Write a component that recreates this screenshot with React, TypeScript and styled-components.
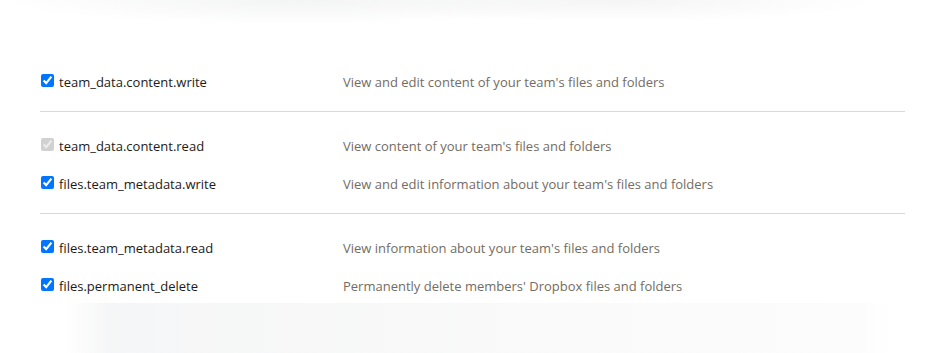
import React from 'react'
import styled, { createGlobalStyle } from 'styled-components'

type Scope = { name: string; description: string; disabled?: boolean }

const groups: Scope[][] = [
  [{ name: 'team_data.content.write', description: "View and edit content of your team's files and folders" }],
  [
    { name: 'team_data.content.read', description: "View content of your team's files and folders", disabled: true },
    { name: 'files.team_metadata.write', description: "View and edit information about your team's files and folders" },
  ],
  [
    { name: 'files.team_metadata.read', description: "View information about your team's files and folders" },
    { name: 'files.permanent_delete', description: "Permanently delete members' Dropbox files and folders" },
  ],
]

export default function App() {
  return (
    <>
      <GlobalStyle />
      <Page>
        <ScopeList>
          {groups.map((group, i) => (
            <Group key={i} isLast={i === groups.length - 1}>
              {group.map((scope) => (
                <Row key={scope.name}>
                  <ScopeName>
                    <Check type="checkbox" checked readOnly disabled={scope.disabled} />
                    {scope.name}
                  </ScopeName>
                  <Description>{scope.description}</Description>
                </Row>
              ))}
            </Group>
          ))}
        </ScopeList>
      </Page>
    </>
  )
}

const GlobalStyle = createGlobalStyle`
  html, body {
    margin: 0;
    padding: 0;
  }
  body {
    width: 931px;
    height: 353px;
    overflow: hidden;
    font-family: "Open Sans", "Noto Sans", sans-serif;
    background:
      radial-gradient(ellipse 300px 24px at 300px 0px, rgba(240, 241, 241, 0.8), rgba(255, 255, 255, 0)),
      radial-gradient(ellipse 260px 22px at 620px 0px, rgba(242, 242, 242, 0.8), rgba(255, 255, 255, 0)),
      linear-gradient(90deg, rgba(255, 255, 255, 0) 65px, rgba(244, 245, 246, 0.9) 110px, rgba(248, 248, 248, 0.8) 500px, rgba(250, 250, 250, 0.6) 860px, rgba(255, 255, 255, 0) 895px) 0 303px / 100% 50px no-repeat,
      #fff;
  }
`

const Page = styled.div`
  padding: 48px 0 0 40px;
  height: 303px;
  box-sizing: border-box;
  width: 931px;
`

const ScopeList = styled.div`
  display: flex;
  flex-direction: column;
  width: 865px;
`

const Group = styled.div<{ isLast: boolean }>`
  display: flex;
  flex-direction: column;
  padding: 15px 0 10px;
  border-bottom: ${(p) => (p.isLast ? 'none' : '1px solid #d9d9d9')};
`

const Row = styled.div`
  display: grid;
  grid-template-columns: 303px 1fr;
  align-items: center;
  height: 38px;
`

const ScopeName = styled.div`
  display: flex;
  align-items: center;
  gap: 5px;
  font-size: 13px;
  color: #1e1919;
`

const Check = styled.input`
  width: 13px;
  height: 13px;
  margin: -3px 0 0 1px;
`

const Description = styled.div`
  font-size: 13px;
  color: #736c64;
`
